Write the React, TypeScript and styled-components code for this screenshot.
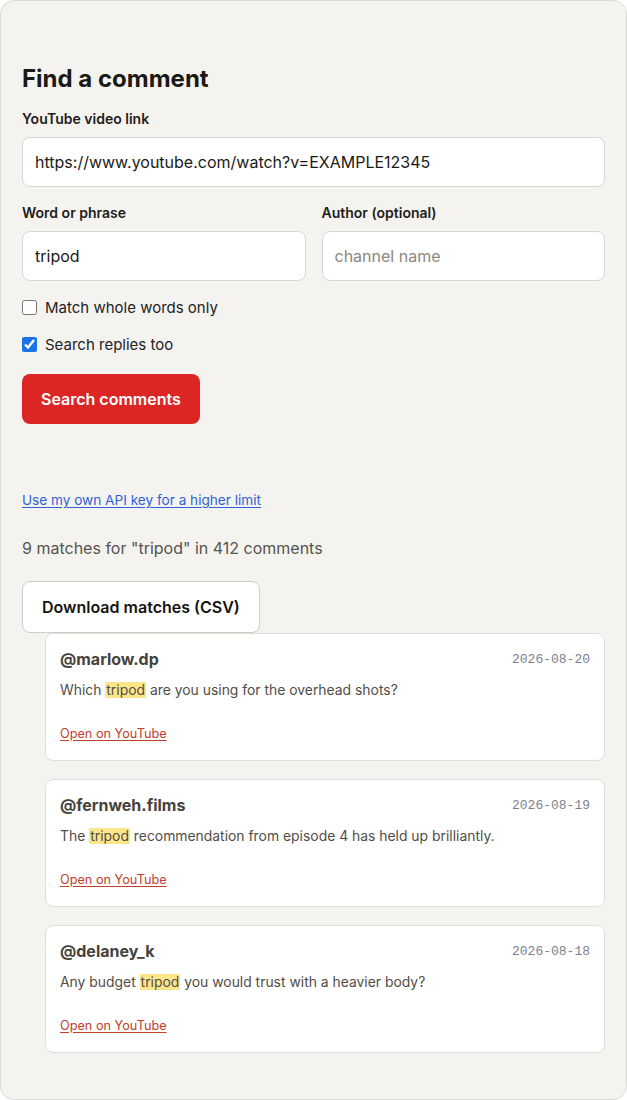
import { FC } from "react";
import styled, { createGlobalStyle } from "styled-components";

const GlobalStyle = createGlobalStyle`
  html, body {
    margin: 0;
    padding: 0;
    background: #ffffff;
  }
  body {
    font-family: Inter, "Noto Sans", "Liberation Sans", sans-serif;
    color: #1c1a17;
  }
  * {
    box-sizing: border-box;
  }
`;

type Match = {
  author: string;
  date: string;
  before: string;
  after: string;
};

const matches: Match[] = [
  {
    author: "@marlow.dp",
    date: "2026-08-20",
    before: "Which ",
    after: " are you using for the overhead shots?",
  },
  {
    author: "@fernweh.films",
    date: "2026-08-19",
    before: "The ",
    after: " recommendation from episode 4 has held up brilliantly.",
  },
  {
    author: "@delaney_k",
    date: "2026-08-18",
    before: "Any budget ",
    after: " you would trust with a heavier body?",
  },
];

const App: FC = () => {
  return (
    <>
      <GlobalStyle />
      <SPanel>
        <STitle>Find a comment</STitle>

        <SField>
          <SLabel htmlFor="video">YouTube video link</SLabel>
          <SInput
            id="video"
            defaultValue="https://www.youtube.com/watch?v=EXAMPLE12345"
          />
        </SField>

        <SRow>
          <SField>
            <SLabel htmlFor="term">Word or phrase</SLabel>
            <SInput id="term" defaultValue="tripod" />
          </SField>
          <SField>
            <SLabel htmlFor="author">Author (optional)</SLabel>
            <SInput id="author" placeholder="channel name" />
          </SField>
        </SRow>

        <SChecks>
          <SCheck>
            <SBox type="checkbox" />
            Match whole words only
          </SCheck>
          <SCheck>
            <SBox type="checkbox" defaultChecked />
            Search replies too
          </SCheck>
        </SChecks>

        <SSearch type="button">Search comments</SSearch>

        <SKeyLink href="#">Use my own API key for a higher limit</SKeyLink>

        <SSummary>9 matches for "tripod" in 412 comments</SSummary>

        <SDownload type="button">Download matches (CSV)</SDownload>

        <SList>
          {matches.map((m) => (
            <SCard key={m.author}>
              <SCardHead>
                <SAuthor>{m.author}</SAuthor>
                <SDate>{m.date}</SDate>
              </SCardHead>
              <SText>
                {m.before}
                <SMark>tripod</SMark>
                {m.after}
              </SText>
              <SOpen href="#">Open on YouTube</SOpen>
            </SCard>
          ))}
        </SList>
      </SPanel>
    </>
  );
};

export default App;

const SPanel = styled.main`
  display: flex;
  flex-direction: column;
  align-items: flex-start;
  min-height: 1099px;
  padding: 63px 21px 46px;
  background: #f4f3f0;
  border: 1px solid #dcdad5;
  border-radius: 14px;
`;

const STitle = styled.h1`
  margin: 0 0 15px;
  font-size: 24px;
  line-height: 30px;
  font-weight: 700;
  color: #1b1915;
`;

const SField = styled.div`
  display: flex;
  flex-direction: column;
  gap: 8px;
  width: 100%;
`;

const SLabel = styled.label`
  font-size: 14px;
  line-height: 20px;
  font-weight: 600;
  color: #1f1d19;
`;

const SInput = styled.input`
  width: 100%;
  height: 50px;
  padding: 0 12px;
  font-family: inherit;
  font-size: 16px;
  color: #1c1a17;
  background: #ffffff;
  border: 1px solid #d8d6d1;
  border-radius: 8px;
  outline: none;

  &::placeholder {
    color: #8a8780;
  }
`;

const SRow = styled.div`
  display: grid;
  grid-template-columns: 1fr 1fr;
  gap: 16px;
  width: 100%;
  margin-top: 16px;
`;

const SChecks = styled.div`
  display: flex;
  flex-direction: column;
  gap: 18px;
  margin-top: 17px;
`;

const SCheck = styled.label`
  display: flex;
  align-items: center;
  gap: 8px;
  font-size: 15px;
  line-height: 19px;
  color: #24221e;
`;

const SBox = styled.input`
  width: 15px;
  height: 15px;
  margin: 0;
  accent-color: #1a73e8;
`;

const SSearch = styled.button`
  margin-top: 20px;
  height: 50px;
  padding: 0 19px;
  font-family: inherit;
  font-size: 16px;
  font-weight: 600;
  color: #ffffff;
  background: #dc2626;
  border: none;
  border-radius: 8px;
  cursor: pointer;
`;

const SKeyLink = styled.a`
  margin-top: 66px;
  font-size: 13.6px;
  line-height: 20px;
  color: #2f62d6;
  text-decoration: underline;
  text-underline-offset: 2px;
`;

const SSummary = styled.p`
  margin: 26px 0 0;
  font-size: 16px;
  line-height: 24px;
  color: #57534d;
`;

const SDownload = styled.button`
  margin-top: 21px;
  height: 52px;
  padding: 0 19px;
  font-family: inherit;
  font-size: 16px;
  font-weight: 600;
  color: #15130f;
  background: #ffffff;
  border: 1px solid #cfcdc8;
  border-radius: 8px;
  cursor: pointer;
`;

const SList = styled.ul`
  display: flex;
  flex-direction: column;
  gap: 18px;
  width: 100%;
  margin: 0;
  padding: 0 0 0 23px;
  list-style: none;
`;

const SCard = styled.li`
  display: flex;
  flex-direction: column;
  align-items: flex-start;
  height: 128px;
  padding: 15px 14px 0;
  background: #ffffff;
  border: 1px solid #e0ded9;
  border-radius: 8px;
`;

const SCardHead = styled.div`
  display: flex;
  justify-content: space-between;
  align-items: center;
  width: 100%;
`;

const SAuthor = styled.span`
  font-size: 16px;
  line-height: 20px;
  font-weight: 700;
  color: #46423c;
`;

const SDate = styled.span`
  font-family: "Liberation Mono", "DejaVu Sans Mono", monospace;
  font-size: 13px;
  color: #7c8190;
`;

const SText = styled.p`
  margin: 11px 0 0;
  font-size: 13.9px;
  line-height: 20px;
  color: #514d47;
`;

const SMark = styled.mark`
  padding: 0 1px;
  background: #fde68a;
  color: inherit;
`;

const SOpen = styled.a`
  margin-top: 24px;
  font-size: 12.7px;
  line-height: 20px;
  color: #c2412d;
  text-decoration: underline;
  text-underline-offset: 2px;
`;
